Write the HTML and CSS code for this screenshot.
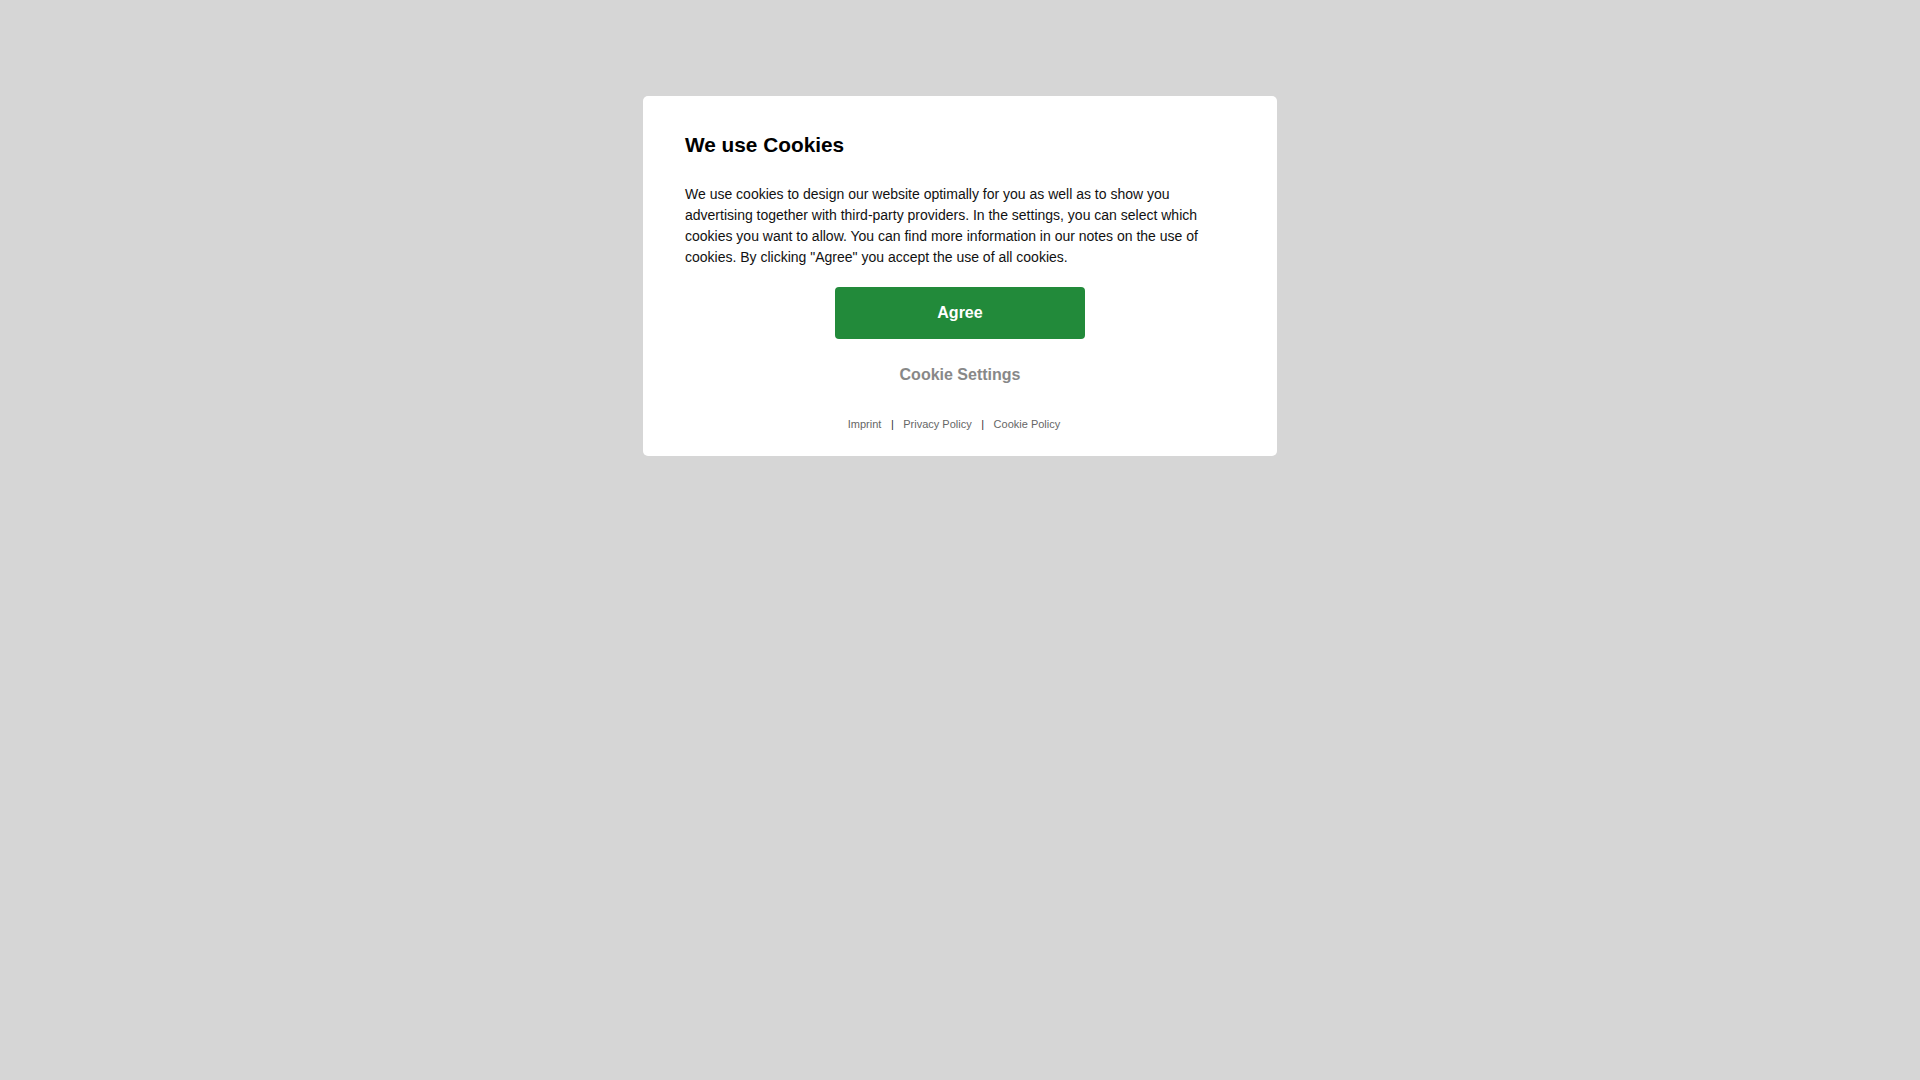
FILE: index.html
```html
<!DOCTYPE html>
<html lang="en">
<head>
<meta charset="utf-8">
<title>We use Cookies</title>
<link rel="stylesheet" href="styles.css">
</head>
<body>
<div class="overlay">
  <div class="card">
    <h2 class="title">We use Cookies</h2>
    <p class="text">We use cookies to design our website optimally for you as well as to show you advertising together with third-party providers. In the settings, you can select which cookies you want to allow. You can find more information in our notes on the use of cookies. By clicking "Agree" you accept the use of all cookies.</p>
    <div class="actions">
      <button class="agree">Agree</button>
      <button class="settings">Cookie Settings</button>
    </div>
    <div class="links">
      <a href="#" class="link">Imprint</a><span class="sep">|</span><a href="#" class="link">Privacy Policy</a><span class="sep">|</span><a href="#" class="link">Cookie Policy</a>
    </div>
  </div>
</div>
</body>
</html>
```

FILE: styles.css
```css
html, body {
  margin: 0;
  padding: 0;
  height: 100%;
}
body {
  background: #d6d6d6;
  font-family: "Liberation Sans", Arial, sans-serif;
}
.overlay {
  display: flex;
  justify-content: center;
  align-items: flex-start;
  padding-top: 96px;
}
.card {
  width: 634px;
  box-sizing: border-box;
  background: #ffffff;
  border-radius: 5px;
  padding: 37px 42px 24px;
}
.title {
  margin: 0;
  font-size: 20.8px;
  font-weight: bold;
  line-height: normal;
  color: #000;
}
.text {
  margin: 27px 0 0;
  font-size: 14px;
  line-height: 21px;
  color: #111;
}
.actions {
  display: flex;
  flex-direction: column;
  align-items: center;
  margin-top: 19px;
}
.agree {
  width: 250px;
  height: 52px;
  border: none;
  border-radius: 4px;
  background: #228a3a;
  color: #fff;
  font-family: "Liberation Sans", Arial, sans-serif;
  font-size: 16px;
  font-weight: bold;
  padding: 0;
  cursor: pointer;
}
.settings {
  margin-top: 16px;
  height: 40px;
  line-height: 40px;
  border: none;
  background: none;
  padding: 0 10px;
  color: #888888;
  font-family: "Liberation Sans", Arial, sans-serif;
  font-size: 16px;
  font-weight: bold;
  cursor: pointer;
}
.links {
  display: flex;
  justify-content: center;
  margin-top: 21px;
  padding-right: 12px;
  font-size: 11px;
  line-height: 16px;
}
.link {
  color: #666666;
  text-decoration: none;
}
.sep {
  margin: 0 9.5px;
  color: #333333;
}
```
